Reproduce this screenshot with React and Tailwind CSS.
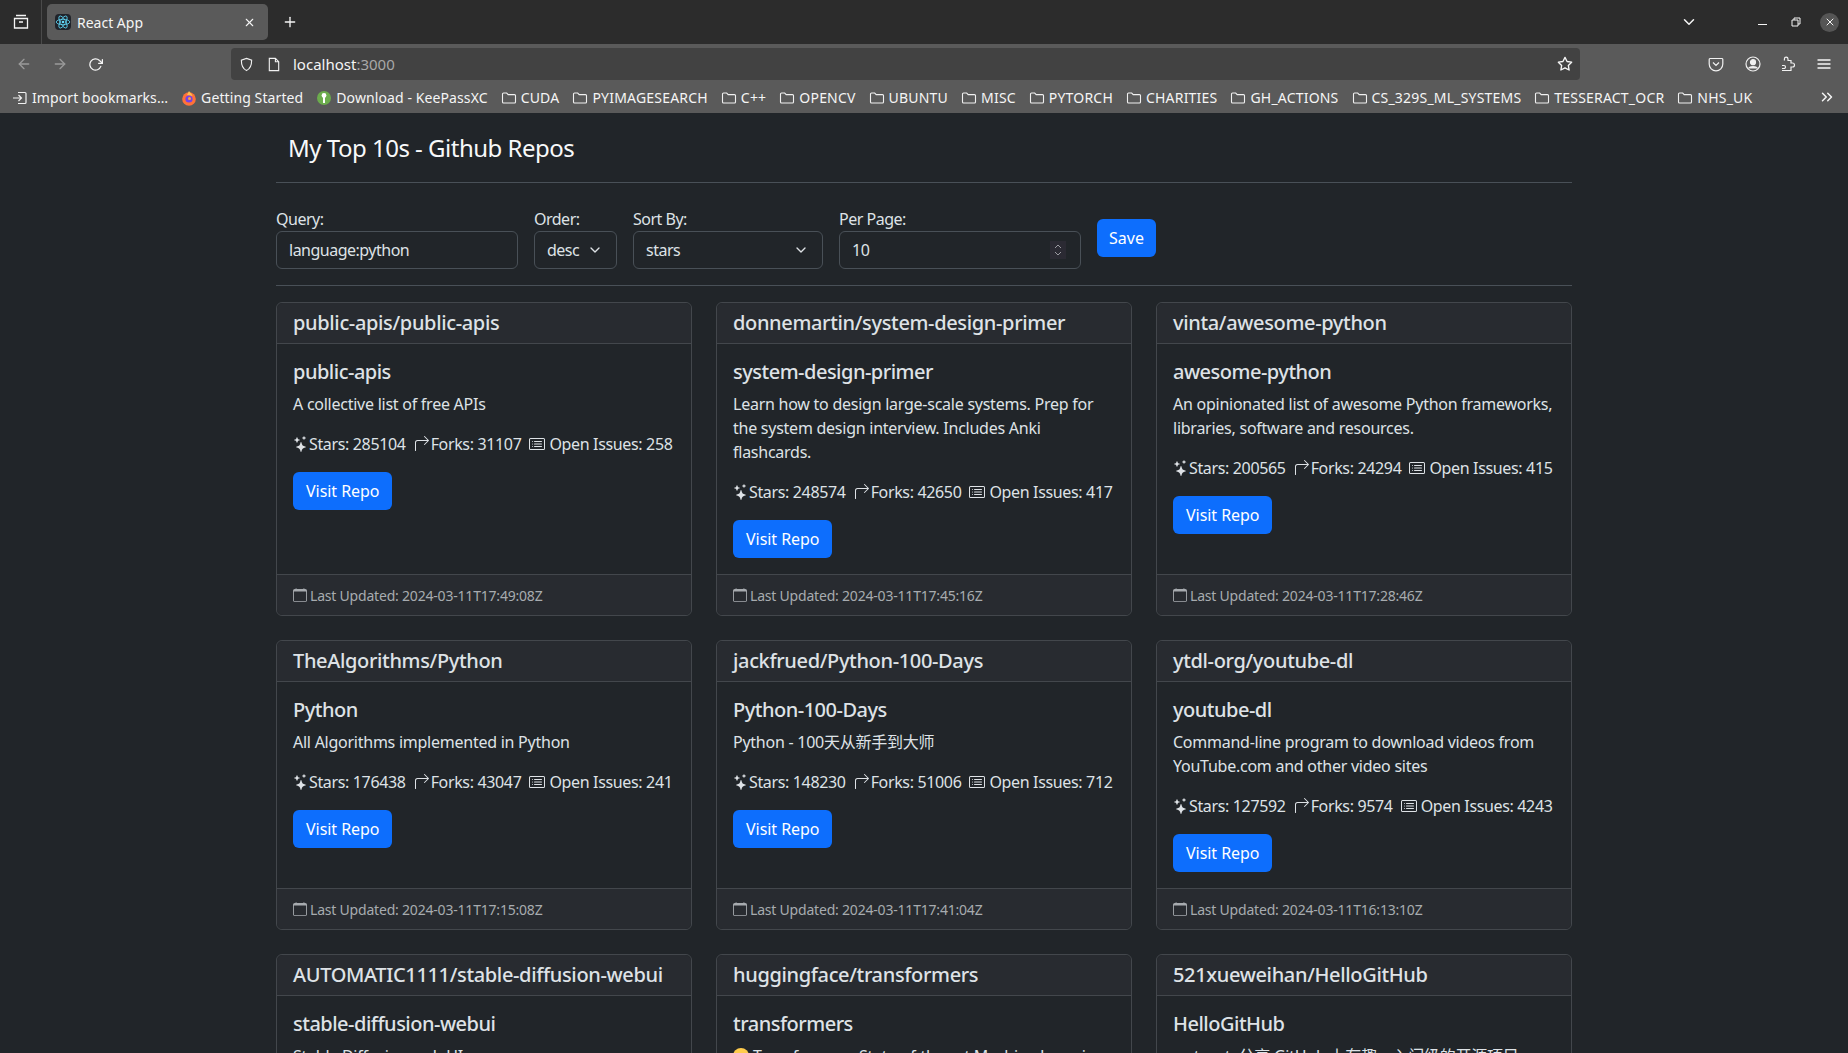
import React from 'react';
import { BsStars, BsArrow90DegRight, BsCardList, BsCalendar } from 'react-icons/bs';
import { FiPlus, FiX, FiArrowLeft, FiArrowRight, FiRotateCw, FiChevronDown, FiChevronsRight, FiStar, FiMenu } from 'react-icons/fi';

const repos = [
  { full: 'public-apis/public-apis', name: 'public-apis', desc: 'A collective list of free APIs', stars: 285104, forks: 31107, issues: 258, updated: '2024-03-11T17:49:08Z' },
  { full: 'donnemartin/system-design-primer', name: 'system-design-primer', desc: 'Learn how to design large-scale systems. Prep for the system design interview. Includes Anki flashcards.', stars: 248574, forks: 42650, issues: 417, updated: '2024-03-11T17:45:16Z' },
  { full: 'vinta/awesome-python', name: 'awesome-python', desc: 'An opinionated list of awesome Python frameworks, libraries, software and resources.', stars: 200565, forks: 24294, issues: 415, updated: '2024-03-11T17:28:46Z' },
  { full: 'TheAlgorithms/Python', name: 'Python', desc: 'All Algorithms implemented in Python', stars: 176438, forks: 43047, issues: 241, updated: '2024-03-11T17:15:08Z' },
  { full: 'jackfrued/Python-100-Days', name: 'Python-100-Days', desc: 'Python - 100天从新手到大师', stars: 148230, forks: 51006, issues: 712, updated: '2024-03-11T17:41:04Z' },
  { full: 'ytdl-org/youtube-dl', name: 'youtube-dl', desc: 'Command-line program to download videos from YouTube.com and other video sites', stars: 127592, forks: 9574, issues: 4243, updated: '2024-03-11T16:13:10Z' },
  { full: 'AUTOMATIC1111/stable-diffusion-webui', name: 'stable-diffusion-webui', desc: 'Stable Diffusion web UI', stars: 127000, forks: 25000, issues: 2000, updated: '2024-03-11T17:00:00Z' },
  { full: 'huggingface/transformers', name: 'transformers', desc: 'Transformers: State-of-the-art Machine Learning', emoji: true, stars: 123000, forks: 24000, issues: 900, updated: '2024-03-11T17:00:00Z' },
  { full: '521xueweihan/HelloGitHub', name: 'HelloGitHub', desc: ':octocat: 分享 GitHub 上有趣、入门级的开源项目', stars: 80000, forks: 9000, issues: 100, updated: '2024-03-11T17:00:00Z' },
];

const folders = ['CUDA', 'PYIMAGESEARCH', 'C++', 'OPENCV', 'UBUNTU', 'MISC', 'PYTORCH', 'CHARITIES', 'GH_ACTIONS', 'CS_329S_ML_SYSTEMS', 'TESSERACT_OCR', 'NHS_UK'];

const FolderIcon = () => (
  <svg width="16" height="16" viewBox="0 0 16 16" fill="none" stroke="#f0f0f0" strokeWidth="1.1" className="shrink-0">
    <path d="M1.5 12V4a1 1 0 0 1 1-1h3.2l1.5 1.6h6.3a1 1 0 0 1 1 1V12a1 1 0 0 1-1 1h-11a1 1 0 0 1-1-1z" />
  </svg>
);

const ReactLogo = () => (
  <svg width="16" height="16" viewBox="0 0 16 16" fill="none" stroke="#61dafb" strokeWidth="0.8" className="rounded-sm bg-[#20232a]">
    <circle cx="8" cy="8" r="1.3" fill="#61dafb" stroke="none" />
    <ellipse cx="8" cy="8" rx="6.8" ry="2.7" />
    <ellipse cx="8" cy="8" rx="6.8" ry="2.7" transform="rotate(60 8 8)" />
    <ellipse cx="8" cy="8" rx="6.8" ry="2.7" transform="rotate(120 8 8)" />
  </svg>
);

const FirefoxLogo = () => (
  <svg width="16" height="16" viewBox="0 0 16 16" className="shrink-0">
    <circle cx="8" cy="9" r="6.8" fill="#ff7139" />
    <path d="M8 1c1 2 3 2.500 3.500 5L6 5z" fill="#ffbd4f" />
    <circle cx="8" cy="9" r="3.600" fill="#7542e5" />
    <circle cx="8.500" cy="8.500" r="1.500" fill="#ffa436" />
  </svg>
);

const KeepassLogo = () => (
  <svg width="16" height="16" viewBox="0 0 16 16" className="shrink-0">
    <circle cx="8" cy="8" r="7" fill="#6cac4d" />
    <circle cx="8" cy="5.500" r="2.400" fill="#fff" />
    <rect x="7" y="6" width="2" height="7" fill="#fff" />
  </svg>
);

const ImportIcon = () => (
  <svg width="16" height="16" viewBox="0 0 16 16" fill="none" stroke="#f0f0f0" strokeWidth="1.2" className="shrink-0">
    <path d="M6 2.500h7a1 1 0 0 1 1 1v9a1 1 0 0 1-1 1H6M1 8h8M6.500 5l3 3-3 3" />
  </svg>
);

const Bookmark = ({ icon, label, className }) => (
  <div className="flex items-center gap-1 shrink-0">
    {icon}
    <span className={className}>{label}</span>
  </div>
);

const BrowserChrome = () => (
  <div className="shrink-0 text-[#f5f5f5]">
    <div className="h-11 bg-[#2c2c2c] flex items-center">
      <div className="w-[42px] h-full flex items-center justify-center border-r border-[#4a4a4a]">
        <svg width="16" height="16" viewBox="0 0 16 16" fill="none" stroke="#f5f5f5" strokeWidth="1.3">
          <path d="M3 1.500h10M1.500 4.500h13v9.500h-13zM6 8h4" />
        </svg>
      </div>
      <div className="ml-[5px] w-[221px] h-9 bg-[#5a5a5a] rounded-[5px] flex items-center pl-2 pr-3 text-[14px]">
        <ReactLogo />
        <span className="ml-[6px] flex-1 tracking-[0px]">React App</span>
        <FiX size={13} />
      </div>
      <FiPlus size={16} className="ml-[14px]" />
      <div className="flex-1" />
      <FiChevronDown size={18} className="mr-[60px]" />
      <div className="w-[9px] h-px bg-[#f5f5f5] mr-6 mt-[5px]" />
      <svg width="10" height="10" viewBox="0 0 10 10" fill="none" stroke="#f5f5f5" strokeWidth="1" className="mr-[19px]">
        <path d="M1 3h6v6H1zM3 3V1h6v6H7" />
      </svg>
      <div className="w-[19px] h-[19px] rounded-full bg-[#555] flex items-center justify-center mr-[9px]">
        <FiX size={12} />
      </div>
    </div>
    <div className="h-9 pt-1 bg-[#5a5a5a] flex items-center">
      <FiArrowLeft size={16} className="ml-4 text-[#9a9a9a]" />
      <FiArrowRight size={16} className="ml-5 text-[#9a9a9a]" />
      <FiRotateCw size={15} className="ml-5 text-[#f5f5f5]" />
      <div className="ml-[128px] w-[1349px] h-8 bg-[#424242] rounded-[4px] flex items-center pl-2 pr-[7px] text-[15px]">
        <svg width="15" height="15" viewBox="0 0 16 16" fill="none" stroke="#f0f0f0" strokeWidth="1.2">
          <path d="M8 1.500l5.500 1.800c0 6-1.500 9.500-5.500 11.200C4 12.800 2.500 9.300 2.500 3.300z" />
        </svg>
        <svg width="14" height="15" viewBox="0 0 14 16" fill="none" stroke="#f0f0f0" strokeWidth="1.2" className="ml-[13px]">
          <path d="M2 1.500h6.500L12 5v9.500H2zM8.500 1.500V5H12" />
        </svg>
        <span className="ml-[12px] tracking-[0px]">localhost<span className="text-[#a8a8a8]">:3000</span></span>
        <div className="flex-1" />
        <FiStar size={16} />
      </div>
      <svg width="16" height="16" viewBox="0 0 16 16" fill="none" stroke="#f0f0f0" strokeWidth="1.2" className="ml-[128px]">
        <path d="M2 2.500h12a1 1 0 0 1 .8 1V8a6.800 6.800 0 0 1-13.600 0V3.500a1 1 0 0 1 .8-1zM5 6.500l3 3 3-3" />
      </svg>
      <svg width="16" height="16" viewBox="0 0 16 16" fill="none" stroke="#f0f0f0" strokeWidth="1.2" className="ml-[21px]">
        <circle cx="8" cy="8" r="7" />
        <circle cx="8" cy="6.200" r="2.500" fill="#f0f0f0" />
        <path d="M3.800 12c1-1.800 7.400-1.800 8.400 0z" fill="#f0f0f0" />
      </svg>
      <svg width="16" height="16" viewBox="0 0 16 16" fill="none" stroke="#f0f0f0" strokeWidth="1.2" className="ml-[19px]">
        <path d="M2 14.500h9V11h1.500a2 2 0 0 0 0-4H11V4.500H8V3a1.800 1.800 0 0 0-3.600 0v1.500M2 9.500h2a1.500 1.500 0 0 1 0 3H2" />
      </svg>
      <FiMenu size={16} className="ml-5" />
    </div>
    <div className="h-[33px] pt-[2px] bg-[#5a5a5a] flex items-center pl-[12px] gap-[13px] text-[14px] relative">
      <Bookmark icon={<ImportIcon />} label="Import bookmarks…" className="tracking-[0.1px]" />
      <Bookmark icon={<FirefoxLogo />} label="Getting Started" className="tracking-[0.1px]" />
      <Bookmark icon={<KeepassLogo />} label="Download - KeePassXC" className="tracking-[0.1px]" />
      {folders.map((f) => (
        <Bookmark key={f} icon={<FolderIcon />} label={f} className="tracking-[0.2px]" />
      ))}
      <FiChevronsRight size={18} className="absolute right-[12px] top-[8px]" />
    </div>
  </div>
);

const Field = ({ label, className, children }) => (
  <div className={className}>
    <label className="block h-6 leading-6 mb-0 text-[#dee2e6]">{label}</label>
    {children}
  </div>
);

const inputCls = 'w-full h-[38px] px-3 bg-[#212529] border border-[#495057] rounded-md text-[#dee2e6] outline-none appearance-none';

const SelectBox = ({ value }) => (
  <div className={`${inputCls} flex items-center justify-between`}>
    <span>{value}</span>
    <FiChevronDown size={16} className="text-[#dee2e6] mr-[1px]" />
  </div>
);

const Toolbar = () => (
  <div className="flex items-start gap-4 pt-6 pb-4 border-b border-[#495057]">
    <Field label="Query:" className="w-[242px]">
      <input className={inputCls} defaultValue="language:python" readOnly />
    </Field>
    <Field label="Order:" className="w-[83px]">
      <SelectBox value="desc" />
    </Field>
    <Field label="Sort By:" className="w-[190px]">
      <SelectBox value="stars" />
    </Field>
    <Field label="Per Page:" className="w-[242px]">
      <div className="relative">
        <input className={inputCls} defaultValue="10" readOnly />
        <div className="absolute right-[15px] top-[10px] w-4 h-[18px] bg-[#2b2a33] flex items-center justify-center">
          <svg width="8" height="14" viewBox="0 0 8 14" fill="none" stroke="#9a9aa0" strokeWidth="1">
            <path d="M1 5l3-3 3 3M1 9l3 3 3-3" />
          </svg>
        </div>
      </div>
    </Field>
    <button className="h-[38px] mt-3 px-3 bg-[#0d6efd] rounded-md text-white tracking-[0px]">Save</button>
  </div>
);

const RepoCard = ({ repo }) => (
  <div className="flex flex-col border border-[#43474c] rounded-md bg-[#212529] text-[#dee2e6]">
    <div className="h-[41px] px-4 flex items-center bg-[#282b30] border-b border-[#43474c] text-[20px] font-medium rounded-t-md tracking-[-0.35px]">
      {repo.full}
    </div>
    <div className="flex-1 p-4">
      <h5 className="text-[20px] leading-6 font-medium mb-2">{repo.name}</h5>
      <p className="leading-6 mb-4 tracking-[-0.25px]">
        {repo.emoji && <span className="inline-block w-4 h-4 rounded-full bg-[#ffcc4d] mr-1 align-[-2px]" />}
        {repo.desc}
      </p>
      <p className="leading-6 mb-4 flex items-center whitespace-nowrap tracking-[-0.35px]">
        <BsStars size={16} />
        <span>Stars: {repo.stars}</span>
        <BsArrow90DegRight size={16} className="ml-2 mr-[1px]" />
        <span>Forks: {repo.forks}</span>
        <BsCardList size={16} className="ml-2 mr-1" />
        <span>Open Issues: {repo.issues}</span>
      </p>
      <button className="h-[38px] px-[13px] bg-[#0d6efd] rounded-md text-white tracking-[-0.05px]">Visit Repo</button>
    </div>
    <div className="h-[41px] px-4 flex items-center bg-[#282b30] border-t border-[#43474c] text-[14px] text-[#a7abaf] rounded-b-md tracking-[-0.2px]">
      <BsCalendar size={14} className="mr-[3px]" />
      <span>Last Updated: {repo.updated}</span>
    </div>
  </div>
);

export default function App() {
  return (
    <div className="h-[1053px] overflow-hidden flex flex-col bg-[#212529] font-['Noto_Sans','Noto_Sans_CJK_SC',sans-serif] tracking-[-0.5px]">
      <BrowserChrome />
      <div className="flex-1 overflow-hidden">
        <div className="w-[1296px] mx-auto">
          <div className="h-[70px] flex items-center px-3 border-b border-[#495057] text-[24px] text-[#f8f9fa]">
            My Top 10s - Github Repos
          </div>
          <Toolbar />
          <div className="grid grid-cols-3 gap-6 mt-4">
            {repos.map((r) => (
              <RepoCard key={r.full} repo={r} />
            ))}
          </div>
        </div>
      </div>
    </div>
  );
}
